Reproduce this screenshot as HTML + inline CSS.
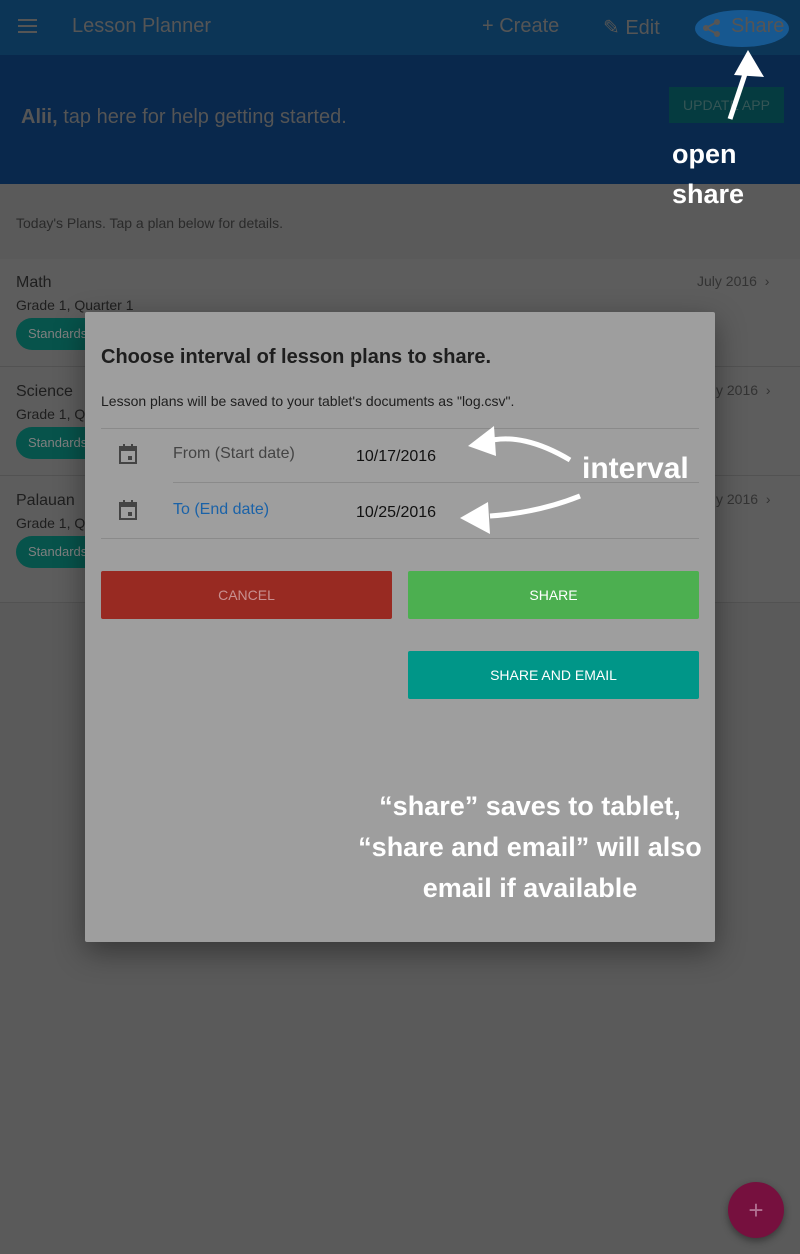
<!DOCTYPE html>
<html><head><style>
*{margin:0;padding:0;box-sizing:border-box}
body{width:800px;height:1254px;background:#5a5a5a;font-family:"Liberation Sans",sans-serif;position:relative;overflow:hidden}
.a{position:absolute}
.hand{font-family:"Liberation Sans Narrow","Liberation Sans",sans-serif;font-weight:bold;color:#fff}
</style></head><body>
<div class="a" style="left:0;top:0;width:800px;height:55px;background:#0c3556"></div>
<div class="a" style="left:18px;top:19px;width:19px;height:2px;background:#555;box-shadow:0 6px 0 #555,0 12px 0 #555"></div>
<div class="a" style="left:72px;top:15px;font-size:20px;color:#555">Lesson Planner</div>
<div class="a" style="left:482px;top:15px;font-size:20px;color:#555">+ Create</div>
<div class="a" style="left:603px;top:15px;font-size:20px;color:#555">✎ Edit</div>
<div class="a" style="left:695px;top:10px;width:94px;height:37px;border-radius:50%;background:#175890"></div>
<svg class="a" style="left:702px;top:18px" width="20" height="20"><circle cx="15" cy="4" r="3" fill="#555"/><circle cx="4" cy="10" r="3" fill="#555"/><circle cx="15" cy="16" r="3" fill="#555"/><path d="M15 4 L4 10 L15 16" stroke="#555" stroke-width="2" fill="none"/></svg>
<div class="a" style="left:731px;top:15px;font-size:20px;color:#555">Share</div>
<div class="a" style="left:0;top:55px;width:800px;height:129px;background:#09284c"></div>
<div class="a" style="left:21px;top:106px;font-size:20px;color:#555"><b>Alii,</b> tap here for help getting started.</div>
<div class="a" style="left:669px;top:87px;width:115px;height:36px;background:#053b40;color:#355555;font-size:14px;text-align:center;line-height:36px">UPDATE APP</div>
<svg class="a" style="left:720px;top:45px" width="50" height="80"><path d="M10 74 L28 20" stroke="#fff" stroke-width="5"/><path d="M14 30 L28 5 L44 32 Z" fill="#fff"/></svg>
<div class="a hand" style="left:672px;top:134px;font-size:27px;line-height:40px">open<br>share</div>
<div class="a" style="left:16px;top:215px;font-size:14px;color:#2a2a2a">Today's Plans. Tap a plan below for details.</div>
<div class="a" style="left:0;top:259px;width:800px;height:344px;background:#5d5d5d"></div>
<div class="a" style="left:0;top:366px;width:800px;height:1px;background:#525252"></div>
<div class="a" style="left:0;top:475px;width:800px;height:1px;background:#525252"></div>
<div class="a" style="left:0;top:602px;width:800px;height:1px;background:#525252"></div>
<div class="a" style="left:16px;top:274px;font-size:16px;color:#1e1e1e">Math</div>
<div class="a" style="left:16px;top:297px;font-size:14px;color:#1e1e1e">Grade 1, Quarter 1</div>
<div class="a" style="left:16px;top:383px;font-size:16px;color:#1e1e1e">Science</div>
<div class="a" style="left:16px;top:406px;font-size:14px;color:#1e1e1e">Grade 1, Qu</div>
<div class="a" style="left:16px;top:492px;font-size:16px;color:#1e1e1e">Palauan</div>
<div class="a" style="left:16px;top:515px;font-size:14px;color:#1e1e1e">Grade 1, Qu</div>
<div class="a" style="left:16px;top:318px;width:90px;height:32px;border-radius:16px;background:#07534b;color:#808080;font-size:13px;line-height:32px;padding-left:12px">Standards</div>
<div class="a" style="left:16px;top:427px;width:90px;height:32px;border-radius:16px;background:#07534b;color:#808080;font-size:13px;line-height:32px;padding-left:12px">Standards</div>
<div class="a" style="left:16px;top:536px;width:90px;height:32px;border-radius:16px;background:#07534b;color:#808080;font-size:13px;line-height:32px;padding-left:12px">Standards</div>
<div class="a" style="left:697px;top:273px;font-size:14px;color:#333">July 2016 &nbsp;›</div>
<div class="a" style="left:716px;top:382px;font-size:14px;color:#333">y 2016 &nbsp;›</div>
<div class="a" style="left:716px;top:491px;font-size:14px;color:#333">y 2016 &nbsp;›</div>

<div class="a" style="left:85px;top:312px;width:630px;height:630px;background:#9e9e9e;border-radius:2px;box-shadow:0 10px 30px rgba(0,0,0,.4)"></div>
<div class="a" style="left:101px;top:346px;font-size:20px;font-weight:bold;color:#1e1e1e">Choose interval of lesson plans to share.</div>
<div class="a" style="left:101px;top:393px;font-size:14px;color:#1e1e1e">Lesson plans will be saved to your tablet's documents as "log.csv".</div>
<div class="a" style="left:101px;top:428px;width:598px;height:1px;background:#8a8a8a"></div>
<div class="a" style="left:173px;top:482px;width:526px;height:1px;background:#8a8a8a"></div>
<div class="a" style="left:101px;top:538px;width:598px;height:1px;background:#8a8a8a"></div>
<svg class="a" style="left:119px;top:444px" width="20" height="22"><rect x="1" y="3" width="16" height="16" fill="none" stroke="#444" stroke-width="2"/><rect x="1" y="3" width="16" height="4" fill="#444"/><rect x="4" y="0" width="2" height="4" fill="#444"/><rect x="12" y="0" width="2" height="4" fill="#444"/><rect x="9" y="12" width="4" height="4" fill="#444"/></svg>
<svg class="a" style="left:119px;top:500px" width="20" height="22"><rect x="1" y="3" width="16" height="16" fill="none" stroke="#444" stroke-width="2"/><rect x="1" y="3" width="16" height="4" fill="#444"/><rect x="4" y="0" width="2" height="4" fill="#444"/><rect x="12" y="0" width="2" height="4" fill="#444"/><rect x="9" y="12" width="4" height="4" fill="#444"/></svg>
<div class="a" style="left:173px;top:445px;font-size:16px;color:#444">From (Start date)</div>
<div class="a" style="left:173px;top:501px;font-size:16px;color:#1a62a8">To (End date)</div>
<div class="a" style="left:356px;top:448px;font-size:16px;color:#111">10/17/2016</div>
<div class="a" style="left:356px;top:504px;font-size:16px;color:#111">10/25/2016</div>
<svg class="a" style="left:460px;top:420px" width="130" height="120"><path d="M110 40 C80 22 50 14 25 22" stroke="#fff" stroke-width="5" fill="none"/><path d="M8 26 L34 6 L36 36 Z" fill="#fff"/><path d="M120 76 C90 88 60 94 30 96" stroke="#fff" stroke-width="5" fill="none"/><path d="M0 98 L28 82 L30 114 Z" fill="#fff"/></svg>
<div class="a hand" style="left:582px;top:452px;font-size:30px">interval</div>
<div class="a" style="left:101px;top:571px;width:291px;height:48px;background:#982a22;color:#c89090;font-size:14px;text-align:center;line-height:48px;border-radius:2px">CANCEL</div>
<div class="a" style="left:408px;top:571px;width:291px;height:48px;background:#4caf50;color:#fff;font-size:14px;text-align:center;line-height:48px;border-radius:2px">SHARE</div>
<div class="a" style="left:408px;top:651px;width:291px;height:48px;background:#009688;color:#fff;font-size:14px;text-align:center;line-height:48px;border-radius:2px">SHARE AND EMAIL</div>
<div class="a hand" style="left:340px;top:786px;width:380px;text-align:center;font-size:27px;line-height:41px;white-space:nowrap">“share” saves to tablet,<br>“share and email” will also<br>email if available</div>
<div class="a" style="left:728px;top:1182px;width:56px;height:56px;border-radius:50%;background:#76103e;color:#b07090;font-size:26px;text-align:center;line-height:56px;box-shadow:0 3px 8px rgba(0,0,0,.4)">+</div>
</body></html>
